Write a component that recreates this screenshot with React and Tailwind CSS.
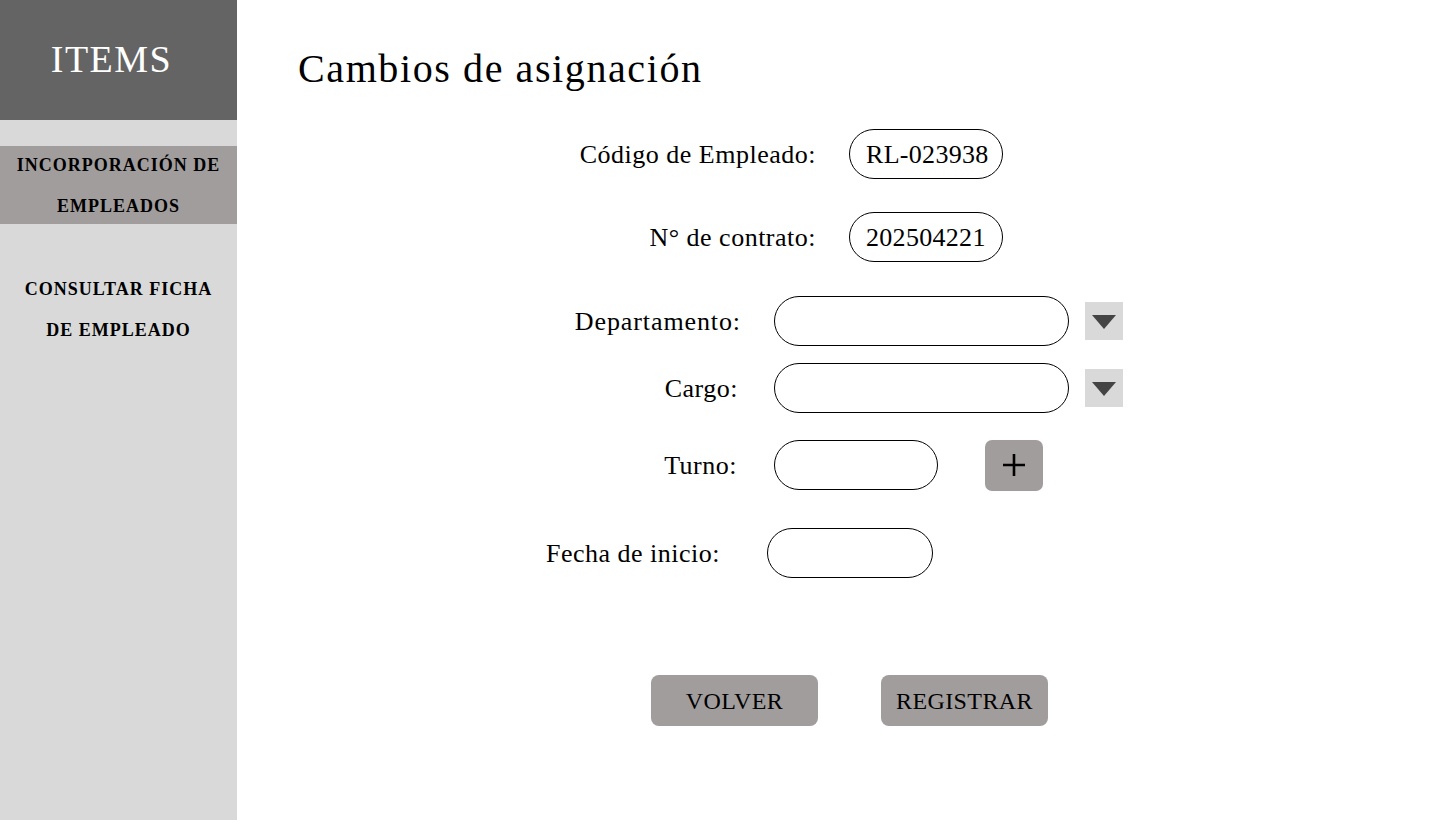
import React from "react";

const serif = { fontFamily: '"Liberation Serif", "Times New Roman", serif' };

function Caret() {
  return (
    <div className="w-[38px] h-[38px] bg-[#d9d9d9] flex items-center justify-center ml-[16px]">
      <svg width="24" height="16" viewBox="0 0 24 16">
        <polygon points="0,2 24,2 12,16" fill="#444444" />
      </svg>
    </div>
  );
}

function Field({ w, children }) {
  return (
    <div
      className={`${w} h-[50px] rounded-full border border-black flex items-center pl-4 text-[26px] tracking-[0.3px] text-black`}
    >
      {children}
    </div>
  );
}

export default function App() {
  return (
    <div className="w-[1440px] h-[820px] flex bg-white overflow-hidden" style={serif}>
      <aside className="w-[237px] h-full bg-[#d9d9d9] flex flex-col shrink-0">
        <div className="h-[120px] bg-[#646464] flex items-center justify-center">
          <span className="text-white text-[38px] tracking-[1.5px] pr-[14px] pb-[2px]">ITEMS</span>
        </div>
        <div className="mt-[26px] h-[78px] pt-[2px] bg-[#a29d9d] flex flex-col items-center justify-center text-black font-bold text-[18px] tracking-[1px] leading-[41px]">
          <span>INCORPORACIÓN DE</span>
          <span>EMPLEADOS</span>
        </div>
        <div className="mt-[45px] flex flex-col items-center text-black font-bold text-[18px] tracking-[1px] leading-[41px]">
          <span>CONSULTAR FICHA</span>
          <span>DE EMPLEADO</span>
        </div>
      </aside>

      <main className="flex-1 flex flex-col pt-[46px]">
        <h1 className="pl-[61px] text-[40px] leading-[46px] tracking-[1.6px] text-black">
          Cambios de asignación
        </h1>

        <div className="mt-[37px] flex flex-col text-[26px] tracking-[0.5px] text-black">
          <div className="flex items-center h-[50px]">
            <div className="w-[579px] text-right">Código de Empleado:</div>
            <div className="ml-[33px]">
              <Field w="w-[154px]">RL-023938</Field>
            </div>
          </div>

          <div className="flex items-center h-[50px] mt-[33px]">
            <div className="w-[579px] text-right">N° de contrato:</div>
            <div className="ml-[33px]">
              <Field w="w-[154px]">202504221</Field>
            </div>
          </div>

          <div className="flex items-center h-[50px] mt-[34px]">
            <div className="w-[504px] text-right tracking-[0.9px]">Departamento:</div>
            <div className="ml-[33px] flex items-center">
              <Field w="w-[295px]" />
              <Caret />
            </div>
          </div>

          <div className="flex items-center h-[50px] mt-[17px]">
            <div className="w-[501px] text-right">Cargo:</div>
            <div className="ml-[36px] flex items-center">
              <Field w="w-[295px]" />
              <Caret />
            </div>
          </div>

          <div className="flex items-center h-[50px] mt-[27px]">
            <div className="w-[500px] text-right">Turno:</div>
            <div className="ml-[37px] flex items-center">
              <Field w="w-[164px]" />
              <button className="ml-[47px] w-[58px] h-[51px] rounded-[7px] bg-[#a29d9d] flex items-center justify-center">
                <svg width="26" height="26" viewBox="0 0 26 26">
                  <path d="M13 2 V24 M2 13 H24" stroke="#000" strokeWidth="2.6" />
                </svg>
              </button>
            </div>
          </div>

          <div className="flex items-center h-[50px] mt-[38px]">
            <div className="w-[483px] text-right">Fecha de inicio:</div>
            <div className="ml-[47px]">
              <Field w="w-[166px]" />
            </div>
          </div>

          <div className="flex items-center mt-[97px] pl-[414px] gap-[63px]">
            <button className="w-[167px] h-[51px] rounded-[8px] bg-[#a29d9d] text-[24px] tracking-[0.4px] text-black flex items-center justify-center">
              VOLVER
            </button>
            <button className="w-[167px] h-[51px] rounded-[8px] bg-[#a29d9d] text-[24px] tracking-[0.4px] text-black flex items-center justify-center">
              REGISTRAR
            </button>
          </div>
        </div>
      </main>
    </div>
  );
}
